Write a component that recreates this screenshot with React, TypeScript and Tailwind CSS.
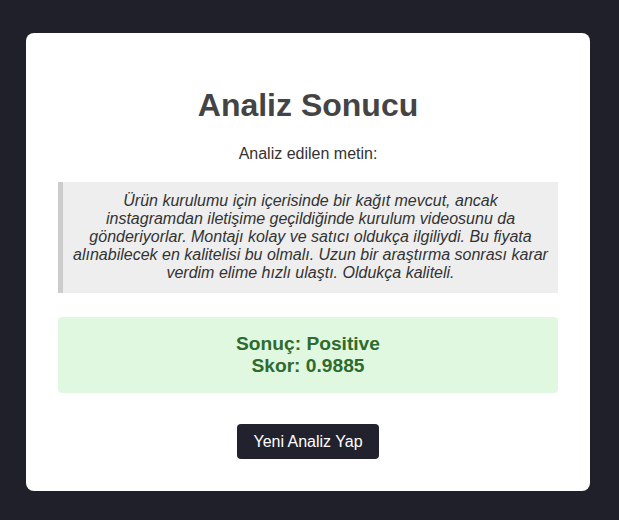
import React from 'react'

const analyzedText =
  'Ürün kurulumu için içerisinde bir kağıt mevcut, ancak instagramdan iletişime geçildiğinde kurulum videosunu da gönderiyorlar. Montajı kolay ve satıcı oldukça ilgiliydi. Bu fiyata alınabilecek en kalitelisi bu olmalı. Uzun bir araştırma sonrası karar verdim elime hızlı ulaştı. Oldukça kaliteli.'

export default function App() {
  const result = { label: 'Positive', score: 0.9885 }

  return (
    <div className="min-h-[520px] bg-[#1f2029] pl-[26px] pt-[33px] pb-[29px] font-['Liberation_Sans',Arial,sans-serif]">
      <div className="w-[564px] rounded-lg bg-white p-8 text-center">
        <h1 className="mt-[22px] mb-[21px] text-[32px] font-bold leading-[normal] text-[#444]">
          Analiz Sonucu
        </h1>

        <p className="text-base leading-[normal] text-[#333]">Analiz edilen metin:</p>

        <blockquote className="mt-[19px] border-l-[5px] border-[#ccc] bg-[#eee] px-[10px] pt-[10px] pb-[11px] text-base italic leading-[18px] text-[#333]">
          {analyzedText}
        </blockquote>

        <div className="mt-[24px] rounded-[4px] bg-[#e0f7e0] p-4 text-[19.2px] font-bold leading-[normal] text-[#2e6b2e]">
          Sonuç: {result.label}
          <br />
          Skor: {result.score}
        </div>

        <div className="mt-[31px] flex justify-center">
          <button className="h-[35px] rounded-[4px] bg-[#21222e] px-4 text-base leading-[normal] text-white">
            Yeni Analiz Yap
          </button>
        </div>
      </div>
    </div>
  )
}
